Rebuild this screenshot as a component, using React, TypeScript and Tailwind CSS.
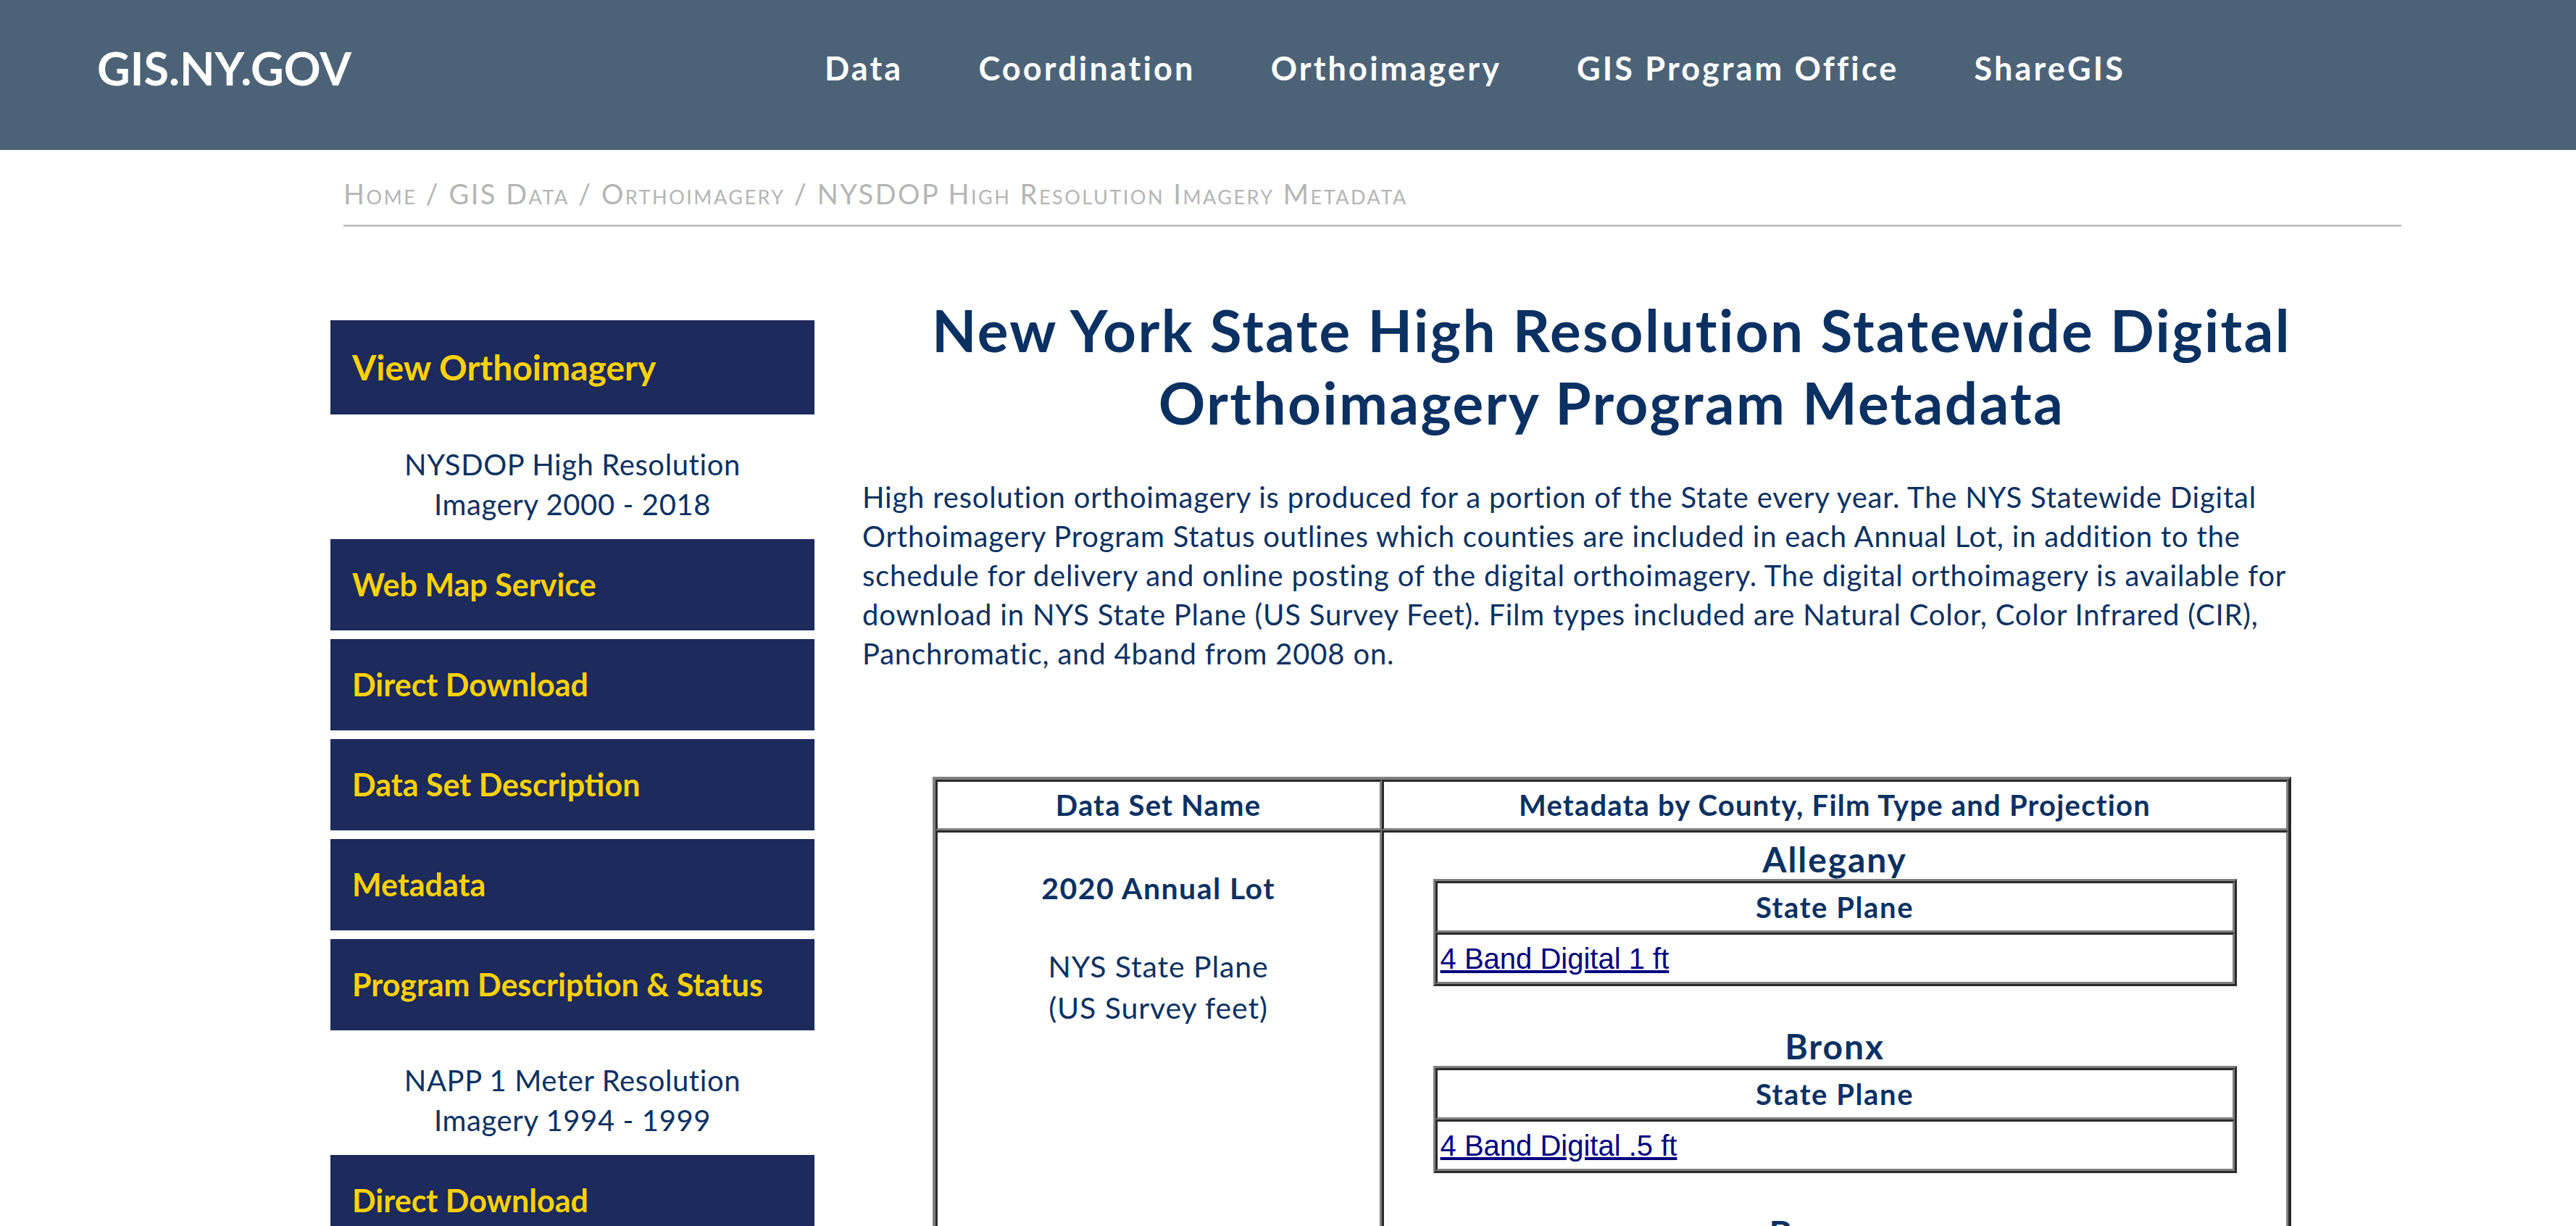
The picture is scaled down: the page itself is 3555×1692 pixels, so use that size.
import React from "react";

const sans = "font-['Lato','Open_Sans',sans-serif]";

const navItems = ["Data", "Coordination", "Orthoimagery", "GIS Program Office", "ShareGIS"];

type SideEntry = { kind: "link"; label: string; big?: boolean } | { kind: "text"; lines: string[] };

const sideEntries: SideEntry[] = [
  { kind: "link", label: "View Orthoimagery", big: true },
  { kind: "text", lines: ["NYSDOP High Resolution", "Imagery 2000 - 2018"] },
  { kind: "link", label: "Web Map Service" },
  { kind: "link", label: "Direct Download" },
  { kind: "link", label: "Data Set Description" },
  { kind: "link", label: "Metadata" },
  { kind: "link", label: "Program Description & Status" },
  { kind: "text", lines: ["NAPP 1 Meter Resolution", "Imagery 1994 - 1999"] },
  { kind: "link", label: "Direct Download" },
  { kind: "link", label: "Data Set Description" },
];

const counties = [
  { name: "Allegany", link: "4 Band Digital 1 ft" },
  { name: "Bronx", link: "4 Band Digital .5 ft" },
  { name: "Broome", link: "4 Band Digital 1 ft" },
];

function Sidebar() {
  return (
    <aside className="w-[668px] shrink-0 mt-[129px] flex flex-col">
      {sideEntries.map((e, i) => {
        if (e.kind === "text") {
          return (
            <div
              key={i}
              className="pt-[42px] pb-[20px] text-center text-[40px] leading-[55px] tracking-[0.015em] text-[#0b3162]"
            >
              {e.lines.map((l) => (
                <div key={l}>{l}</div>
              ))}
            </div>
          );
        }
        const next = sideEntries[i + 1];
        return (
          <a
            key={i}
            href="#"
            className={`flex items-center pl-[30px] bg-[#1c2a5c] text-[#ffd200] font-bold ${
              e.big ? "h-[130px] text-[48px]" : "h-[126px] text-[43px]"
            } ${next && next.kind === "link" ? "mb-[12px]" : ""}`}
          >
            {e.label}
          </a>
        );
      })}
    </aside>
  );
}

const cellBorder = "border-[3px] border-t-[#2b2b2b] border-l-[#2b2b2b] border-b-[#808080] border-r-[#808080]";

function CountyBlock({ name, link }: { name: string; link: string }) {
  return (
    <div className="mb-[56px] flex flex-col items-center">
      <h3 className="text-[48px] leading-[54px] font-bold tracking-[0.04em] text-[#0b3162]">{name}</h3>
      <table className="w-[1109px] border-separate border-spacing-0 border-[3px] border-t-[#808080] border-l-[#808080] border-b-[#2b2b2b] border-r-[#2b2b2b]">
        <tbody>
          <tr>
            <th className={`${cellBorder} h-[71px] text-[40px] tracking-[0.04em] font-bold text-[#0b3162] text-center`}>
              State Plane
            </th>
          </tr>
          <tr>
            <td className={`${cellBorder} h-[71px] pl-[4px] text-left`}>
              <a href="#" className="font-['Liberation_Sans',Arial,sans-serif] text-[40px] text-[#000080] underline">
                {link}
              </a>
            </td>
          </tr>
        </tbody>
      </table>
    </div>
  );
}

function MetadataTable() {
  return (
    <table className="mt-[143px] mx-auto w-[1875px] border-separate border-spacing-0 border-[4px] border-t-[#808080] border-l-[#808080] border-b-[#2b2b2b] border-r-[#2b2b2b]">
      <tbody>
        <tr>
          <th className={`${cellBorder} w-[33%] h-[70px] text-[40px] tracking-[0.03em] font-bold text-[#0b3162] text-center`}>
            Data Set Name
          </th>
          <th className={`${cellBorder} h-[70px] text-[40px] tracking-[0.03em] font-bold text-[#0b3162] text-center`}>
            Metadata by County, Film Type and Projection
          </th>
        </tr>
        <tr>
          <td className={`${cellBorder} align-top text-center text-[41px] leading-[57px] text-[#0b3162] pt-[48px]`}>
            <p className="font-bold tracking-[0.035em]">2020 Annual Lot</p>
            <p className="mt-[51px] tracking-[0.022em]">
              NYS State Plane
              <br />
              (US Survey feet)
            </p>
          </td>
          <td className={`${cellBorder} align-top pt-[10px]`}>
            {counties.map((c) => (
              <CountyBlock key={c.name} name={c.name} link={c.link} />
            ))}
          </td>
        </tr>
      </tbody>
    </table>
  );
}

export default function App() {
  return (
    <div className={`min-h-screen bg-white ${sans}`}>
      {/* Top bar */}
      <header className="h-[207px] bg-[#4c6377] flex items-center pl-[134px] pb-[18px]">
        <div className="w-[1004px] text-white font-bold text-[63px]">GIS.NY.GOV</div>
        <nav className="flex items-center gap-[104px]">
          {navItems.map((n) => (
            <a key={n} href="#" className="text-white font-bold text-[45px] tracking-[0.07em]">
              {n}
            </a>
          ))}
        </nav>
      </header>

      {/* Breadcrumb */}
      <div className="ml-[474px] w-[2840px] pt-[40px] pb-[23px] border-b-[3px] border-[#c4c4c4] text-[38px] leading-[40px] tracking-[2.5px] text-[#b5b5b5] [font-variant:small-caps]">
        Home / GIS Data / Orthoimagery / NYSDOP High Resolution Imagery Metadata
      </div>

      <div className="flex pl-[456px]">
        <Sidebar />
        <main className="ml-[66px] w-[2068px] mt-[92px] text-[#0b3162]">
          <h1 className="text-center text-[80px] leading-[100px] tracking-[0.03em] font-bold">
            New York State High Resolution Statewide Digital Orthoimagery Program Metadata
          </h1>
          <p className="mt-[54px] text-[40px] leading-[54px] tracking-[0.02em]">
            High resolution orthoimagery is produced for a portion of the State every year. The NYS Statewide Digital
            <br />
            Orthoimagery Program Status outlines which counties are included in each Annual Lot, in addition to the
            <br />
            schedule for delivery and online posting of the digital orthoimagery. The digital orthoimagery is available for
            <br />
            download in NYS State Plane (US Survey Feet). Film types included are Natural Color, Color Infrared (CIR),
            <br />
            Panchromatic, and 4band from 2008 on.
          </p>
          <MetadataTable />
        </main>
      </div>
    </div>
  );
}
